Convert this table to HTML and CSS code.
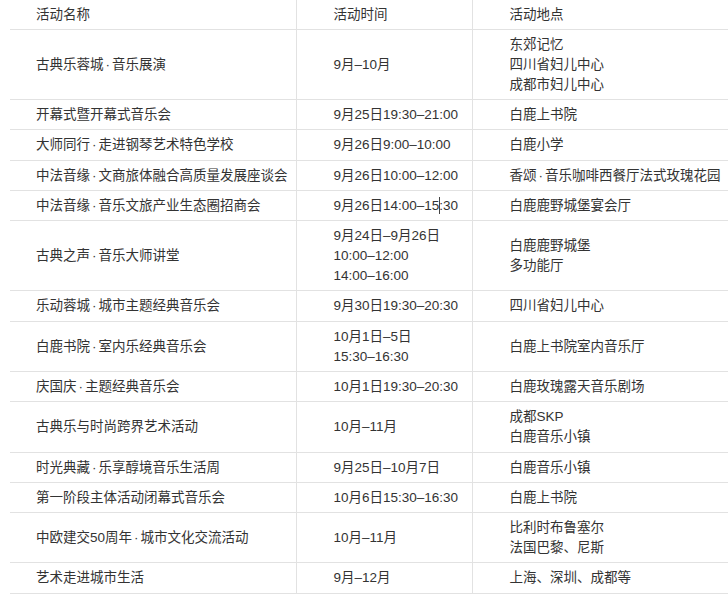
FILE: index.html
```html
<!DOCTYPE html>
<html lang="zh-CN">
<head>
<meta charset="utf-8">
<title>活动列表</title>
<link rel="stylesheet" href="styles.css">
</head>
<body>
<table class="events">
  <colgroup>
    <col class="c-name">
    <col class="c-time">
    <col class="c-place">
  </colgroup>
  <thead>
    <tr><th>活动名称</th><th>活动时间</th><th>活动地点</th></tr>
  </thead>
  <tbody>
    <tr><td>古典乐蓉城<span class="dot">·</span>音乐展演</td><td>9月–10月</td><td>东郊记忆<br>四川省妇儿中心<br>成都市妇儿中心</td></tr>
    <tr><td>开幕式暨开幕式音乐会</td><td>9月25日19:30–21:00</td><td>白鹿上书院</td></tr>
    <tr><td>大师同行<span class="dot">·</span>走进钢琴艺术特色学校</td><td>9月26日9:00–10:00</td><td>白鹿小学</td></tr>
    <tr><td>中法音缘<span class="dot">·</span>文商旅体融合高质量发展座谈会</td><td>9月26日10:00–12:00</td><td>香颂<span class="dot">·</span>音乐咖啡西餐厅法式玫瑰花园</td></tr>
    <tr><td>中法音缘<span class="dot">·</span>音乐文旅产业生态圈招商会</td><td>9月26日14:00–15<span class="caret"></span>:30</td><td>白鹿鹿野城堡宴会厅</td></tr>
    <tr><td>古典之声<span class="dot">·</span>音乐大师讲堂</td><td>9月24日–9月26日<br>10:00–12:00<br>14:00–16:00</td><td>白鹿鹿野城堡<br>多功能厅</td></tr>
    <tr><td>乐动蓉城<span class="dot">·</span>城市主题经典音乐会</td><td>9月30日19:30–20:30</td><td>四川省妇儿中心</td></tr>
    <tr><td>白鹿书院<span class="dot">·</span>室内乐经典音乐会</td><td>10月1日–5日<br>15:30–16:30</td><td>白鹿上书院室内音乐厅</td></tr>
    <tr><td>庆国庆<span class="dot">·</span>主题经典音乐会</td><td>10月1日19:30–20:30</td><td>白鹿玫瑰露天音乐剧场</td></tr>
    <tr><td>古典乐与时尚跨界艺术活动</td><td>10月–11月</td><td>成都SKP<br>白鹿音乐小镇</td></tr>
    <tr><td>时光典藏<span class="dot">·</span>乐享醇境音乐生活周</td><td>9月25日–10月7日</td><td>白鹿音乐小镇</td></tr>
    <tr><td>第一阶段主体活动闭幕式音乐会</td><td>10月6日15:30–16:30</td><td>白鹿上书院</td></tr>
    <tr><td>中欧建交50周年<span class="dot">·</span>城市文化交流活动</td><td>10月–11月</td><td>比利时布鲁塞尔<br>法国巴黎、尼斯</td></tr>
    <tr><td>艺术走进城市生活</td><td>9月–12月</td><td>上海、深圳、成都等</td></tr>
  </tbody>
</table>
</body>
</html>
```

FILE: styles.css
```css
html, body {
  margin: 0;
  padding: 0;
  background: #ffffff;
  overflow: hidden;
}

.events {
  margin-left: 10px;
  width: 740px;
  border-collapse: collapse;
  table-layout: fixed;
  font-family: "Liberation Sans", "Noto Sans CJK SC", sans-serif;
  font-size: 13.5px;
  color: #333333;
}

.c-name { width: 286px; }
.c-time { width: 176px; }
.c-place { width: 278px; }

.events th,
.events td {
  text-align: left;
  font-weight: normal;
  vertical-align: middle;
  line-height: 20px;
  padding: 5.1px 0 4.2px 37px;
  border-bottom: 1px solid #e2e2e2;
  white-space: nowrap;
}

.events th {
  padding-top: 4.5px;
  padding-bottom: 4.2px;
}

.events th:first-child,
.events td:first-child {
  padding-left: 26px;
}

.events th + th,
.events td + td {
  border-left: 1px solid #e2e2e2;
}

.dot {
  padding: 0 2px;
}

.caret {
  display: inline-block;
  width: 1px;
  height: 17px;
  background: #444444;
  vertical-align: -4px;
  margin: 0 -0.5px;
}
```
